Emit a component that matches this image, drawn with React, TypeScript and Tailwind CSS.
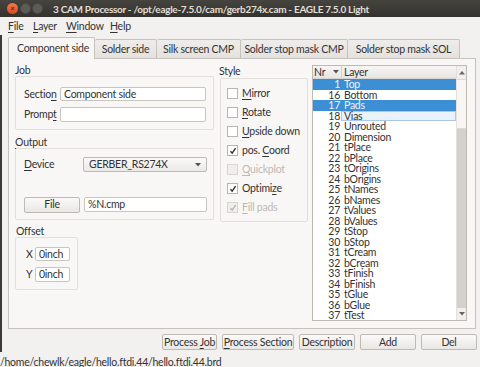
import React from "react";

const layers: [number, string][] = [
  [1, "Top"],
  [16, "Bottom"],
  [17, "Pads"],
  [18, "Vias"],
  [19, "Unrouted"],
  [20, "Dimension"],
  [21, "tPlace"],
  [22, "bPlace"],
  [23, "tOrigins"],
  [24, "bOrigins"],
  [25, "tNames"],
  [26, "bNames"],
  [27, "tValues"],
  [28, "bValues"],
  [29, "tStop"],
  [30, "bStop"],
  [31, "tCream"],
  [32, "bCream"],
  [33, "tFinish"],
  [34, "bFinish"],
  [35, "tGlue"],
  [36, "bGlue"],
  [37, "tTest"],
];

const selected = [1, 17];

const tabs = [
  { label: "Solder side", w: "w-[62px]" },
  { label: "Silk screen CMP", w: "w-[84px]" },
  { label: "Solder stop mask CMP", w: "w-[107px]" },
  { label: "Solder stop mask SOL", w: "w-[112px]" },
];

const Mn = ({ children }: { children: React.ReactNode }) => <span className="underline underline-offset-[1.5px]">{children}</span>;

const Check = ({ checked, disabled }: { checked?: boolean; disabled?: boolean }) => (
  <div
    className={`w-[11px] h-[11px] border flex items-center justify-center ${
      disabled ? "border-[#d8d5d1] bg-[#f1efec]" : "border-[#b9b5b0] bg-white"
    }`}
  >
    {checked && (
      <svg width="8" height="8" viewBox="0 0 8 8">
        <path d="M1.5 4.2 L3.2 6.2 L6.6 1.2" fill="none" stroke={disabled ? "#b5b2ae" : "#2f2f2f"} strokeWidth="1.4" />
      </svg>
    )}
  </div>
);

const StyleRow = ({ label, checked, disabled }: { label: React.ReactNode; checked?: boolean; disabled?: boolean }) => (
  <div className="h-[19px] flex items-center gap-[4px]">
    <Check checked={checked} disabled={disabled} />
    <span className={disabled ? "text-[#bdb9b4]" : "text-[#333]"}>{label}</span>
  </div>
);

const Btn = ({ children, w }: { children: React.ReactNode; w: string }) => (
  <div
    className={`${w} h-[16px] flex items-center justify-center rounded-[2px] border border-[#bdb9b3] bg-gradient-to-b from-[#fbfaf9] to-[#e9e7e4] text-[#333]`}
  >
    <span>{children}</span>
  </div>
);

const Field = ({ value, className }: { value?: string; className: string }) => (
  <div className={`${className} rounded-[2px] border border-[#c9c5bf] bg-white flex items-center pl-[3px] text-[#333]`}>
    {value}
  </div>
);

export default function App() {
  return (
    <div
      className="w-[480px] h-[367px] overflow-hidden whitespace-nowrap bg-[#f2f1f0] text-[10.5px] tracking-[-0.25px] leading-none text-[#333]"
      style={{ fontFamily: "Lato, 'Open Sans', sans-serif" }}
    >
      {/* title bar */}
      <div className="h-[17px] bg-gradient-to-b from-[#45443f] to-[#33322e] flex items-center">
        <div className="ml-[7px] w-[11px] h-[11px] rounded-full bg-gradient-to-b from-[#f37a4b] to-[#d9471c] flex items-center justify-center text-[7px] text-[#5a2010] font-bold">
          ×
        </div>
        <div className="ml-[2px] w-[11px] h-[11px] rounded-full bg-[#5c5b56] border border-[#4a4945]" />
        <div className="ml-[1px] w-[11px] h-[11px] rounded-full bg-[#5c5b56] border border-[#4a4945]" />
        <span className="ml-[10px] font-bold text-[10px] tracking-[-0.3px] text-[#e3dfd6]">
          3 CAM Processor - /opt/eagle-7.5.0/cam/gerb274x.cam - EAGLE 7.5.0 Light
        </span>
      </div>

      {/* menu bar */}
      <div className="h-[18px] flex items-center pl-[8px]">
        <span className="w-[25px]">
          <Mn>F</Mn>ile
        </span>
        <span className="w-[33px]">
          <Mn>L</Mn>ayer
        </span>
        <span className="w-[44px]">
          <Mn>W</Mn>indow
        </span>
        <span>
          <Mn>H</Mn>elp
        </span>
      </div>

      {/* body */}
      <div className="h-[317px] flex">
        <div className="w-[2px] bg-[#3a3a37]" />
        <div className="flex-1 pl-[6px] pt-[2px] flex flex-col">
          {/* tabs */}
          <div className="h-[21px] flex items-end">
            <div className="w-[87px] h-[22px] -mb-[1px] relative z-10 border border-b-0 border-[#c6c2bc] rounded-t-[2px] bg-[#f9f7f5] flex items-center pl-[8px]">
              Component side
            </div>
            {tabs.map((t) => (
              <div
                key={t.label}
                className={`${t.w} h-[19px] border border-l-0 border-[#c6c2bc] border-b-0 rounded-t-[2px] bg-gradient-to-b from-[#efedeb] to-[#e4e1de] flex items-center justify-center`}
              >
                {t.label}
              </div>
            ))}
          </div>

          {/* pane */}
          <div className="w-[468px] h-[271px] border border-[#c6c2bc] bg-[#f9f7f5] flex pl-[6px] pt-[6px]">
            {/* left column */}
            <div className="w-[199px] flex flex-col">
              <div className="h-[11px] flex items-center">Job</div>
              <div className="h-[54px] border border-[#e3e0dc] rounded-[2px] pl-[8px] pr-[7px] pt-[10px]">
                <div className="flex items-center h-[14px]">
                  <span className="w-[36px]">
                    Sectio<Mn>n</Mn>
                  </span>
                  <Field value="Component side" className="flex-1 h-[14px]" />
                </div>
                <div className="flex items-center h-[15px] mt-[6px]">
                  <span className="w-[36px]">
                    Promp<Mn>t</Mn>
                  </span>
                  <Field className="flex-1 h-[15px]" />
                </div>
              </div>

              <div className="h-[12px] mt-[6px] flex items-center">
                <Mn>O</Mn>utput
              </div>
              <div className="h-[72px] border border-[#e3e0dc] rounded-[2px] pl-[8px] pr-[6px] pt-[8px]">
                <div className="flex items-center h-[15px]">
                  <span className="w-[59px]">
                    <Mn>D</Mn>evice
                  </span>
                  <div className="flex-1 h-[15px] rounded-[2px] border border-[#bdb9b3] bg-gradient-to-b from-[#fbfaf9] to-[#ebe9e6] flex items-center justify-between pl-[5px] pr-[5px]">
                    <span>GERBER_RS274X</span>
                    <svg width="6" height="4" viewBox="0 0 6 4">
                      <path d="M0 0 H6 L3 3.5 Z" fill="#555" />
                    </svg>
                  </div>
                </div>
                <div className="flex items-center h-[15px] mt-[25px] gap-[4px]">
                  <Btn w="w-[56px]">File</Btn>
                  <Field value="%N.cmp" className="flex-1 h-[15px]" />
                </div>
              </div>

              <div className="h-[12px] mt-[5px] flex items-center pl-[1px]">Offset</div>
              <div className="w-[63px] h-[53px] border border-[#e3e0dc] rounded-[2px] pl-[10px] pt-[9px]">
                <div className="flex items-center h-[14px]">
                  <span className="w-[9px]">X</span>
                  <Field value="0inch" className="w-[35px] h-[14px]" />
                </div>
                <div className="flex items-center h-[15px] mt-[6px]">
                  <span className="w-[9px]">Y</span>
                  <Field value="0inch" className="w-[35px] h-[15px]" />
                </div>
              </div>
            </div>

            {/* style column */}
            <div className="w-[89px] ml-[5px] flex flex-col">
              <div className="h-[13px] flex items-center">Style</div>
              <div className="h-[144px] ml-[1px] border border-[#e3e0dc] rounded-[2px] pl-[6px] pt-[5px]">
                <StyleRow label={<><Mn>M</Mn>irror</>} />
                <StyleRow label={<><Mn>R</Mn>otate</>} />
                <StyleRow label={<><Mn>U</Mn>pside down</>} />
                <StyleRow label={<>pos. <Mn>C</Mn>oord</>} checked />
                <StyleRow label={<><Mn>Q</Mn>uickplot</>} disabled />
                <StyleRow label={<>Optimi<Mn>z</Mn>e</>} checked />
                <StyleRow label={<><Mn>F</Mn>ill pads</>} checked disabled />
              </div>
            </div>

            {/* layer list */}
            <div className="w-[155px] h-[256px] ml-[4px] border border-[#bdb9b3] bg-white flex">
              <div className="flex-1 flex flex-col">
                <div className="h-[13px] flex items-center border-b border-[#d6d3cf] bg-gradient-to-b from-[#f7f6f5] to-[#e7e5e2]">
                  <span className="w-[20px] pl-[1px]">Nr</span>
                  <svg width="6" height="4" viewBox="0 0 6 4" className="mr-[1px]">
                    <path d="M0 0 H6 L3 3.5 Z" fill="#555" />
                  </svg>
                  <div className="w-px h-[13px] bg-[#d6d3cf] ml-[1px]" />
                  <span className="pl-[2px]">Layer</span>
                </div>
                {layers.map(([nr, name]) => {
                  const sel = selected.includes(nr);
                  const focus = nr === 18;
                  return (
                    <div
                      key={nr}
                      className={`h-[10.5px] flex items-center ${sel ? "bg-[#3c8fd5] text-[#eef4fb]" : "text-[#333]"}`}
                    >
                      <span className="w-[27px] text-right">{nr}</span>
                      <span
                        className={`flex-1 h-full flex items-center pl-[2px] ml-[1px] border ${
                          focus ? "bg-[#eaf2fb] border-[#a9c9e9]" : "border-transparent"
                        }`}
                      >
                        {name}
                      </span>
                    </div>
                  );
                })}
              </div>
              <div className="w-[10px] flex flex-col border-l border-[#e3e0dc]">
                <div className="h-[13px] flex items-center justify-center bg-[#f1efed]">
                  <svg width="6" height="4" viewBox="0 0 6 4">
                    <path d="M0 3.5 H6 L3 0 Z" fill="#666" />
                  </svg>
                </div>
                <div className="h-[50px] bg-[#f7f6f5] border-y border-[#dcd9d5]" />
                <div className="flex-1 bg-[#d3d1ce]" />
                <div className="h-[12px] flex items-center justify-center bg-[#f1efed]">
                  <svg width="6" height="4" viewBox="0 0 6 4">
                    <path d="M0 0 H6 L3 3.5 Z" fill="#666" />
                  </svg>
                </div>
              </div>
            </div>
          </div>

          {/* buttons */}
          <div className="mt-[5px] flex gap-[5px] pl-[154px]">
            <Btn w="w-[55px]">
              Process <Mn>J</Mn>ob
            </Btn>
            <Btn w="w-[72px]">
              <Mn>P</Mn>rocess Section
            </Btn>
            <Btn w="w-[56px]">Description</Btn>
            <Btn w="w-[56px]">Add</Btn>
            <Btn w="w-[56px]">Del</Btn>
          </div>
        </div>
      </div>

      {/* status bar */}
      <div className="h-[15px] pt-[6px] flex items-center">/home/chewlk/eagle/hello.ftdi.44/hello.ftdi.44.brd</div>
    </div>
  );
}
